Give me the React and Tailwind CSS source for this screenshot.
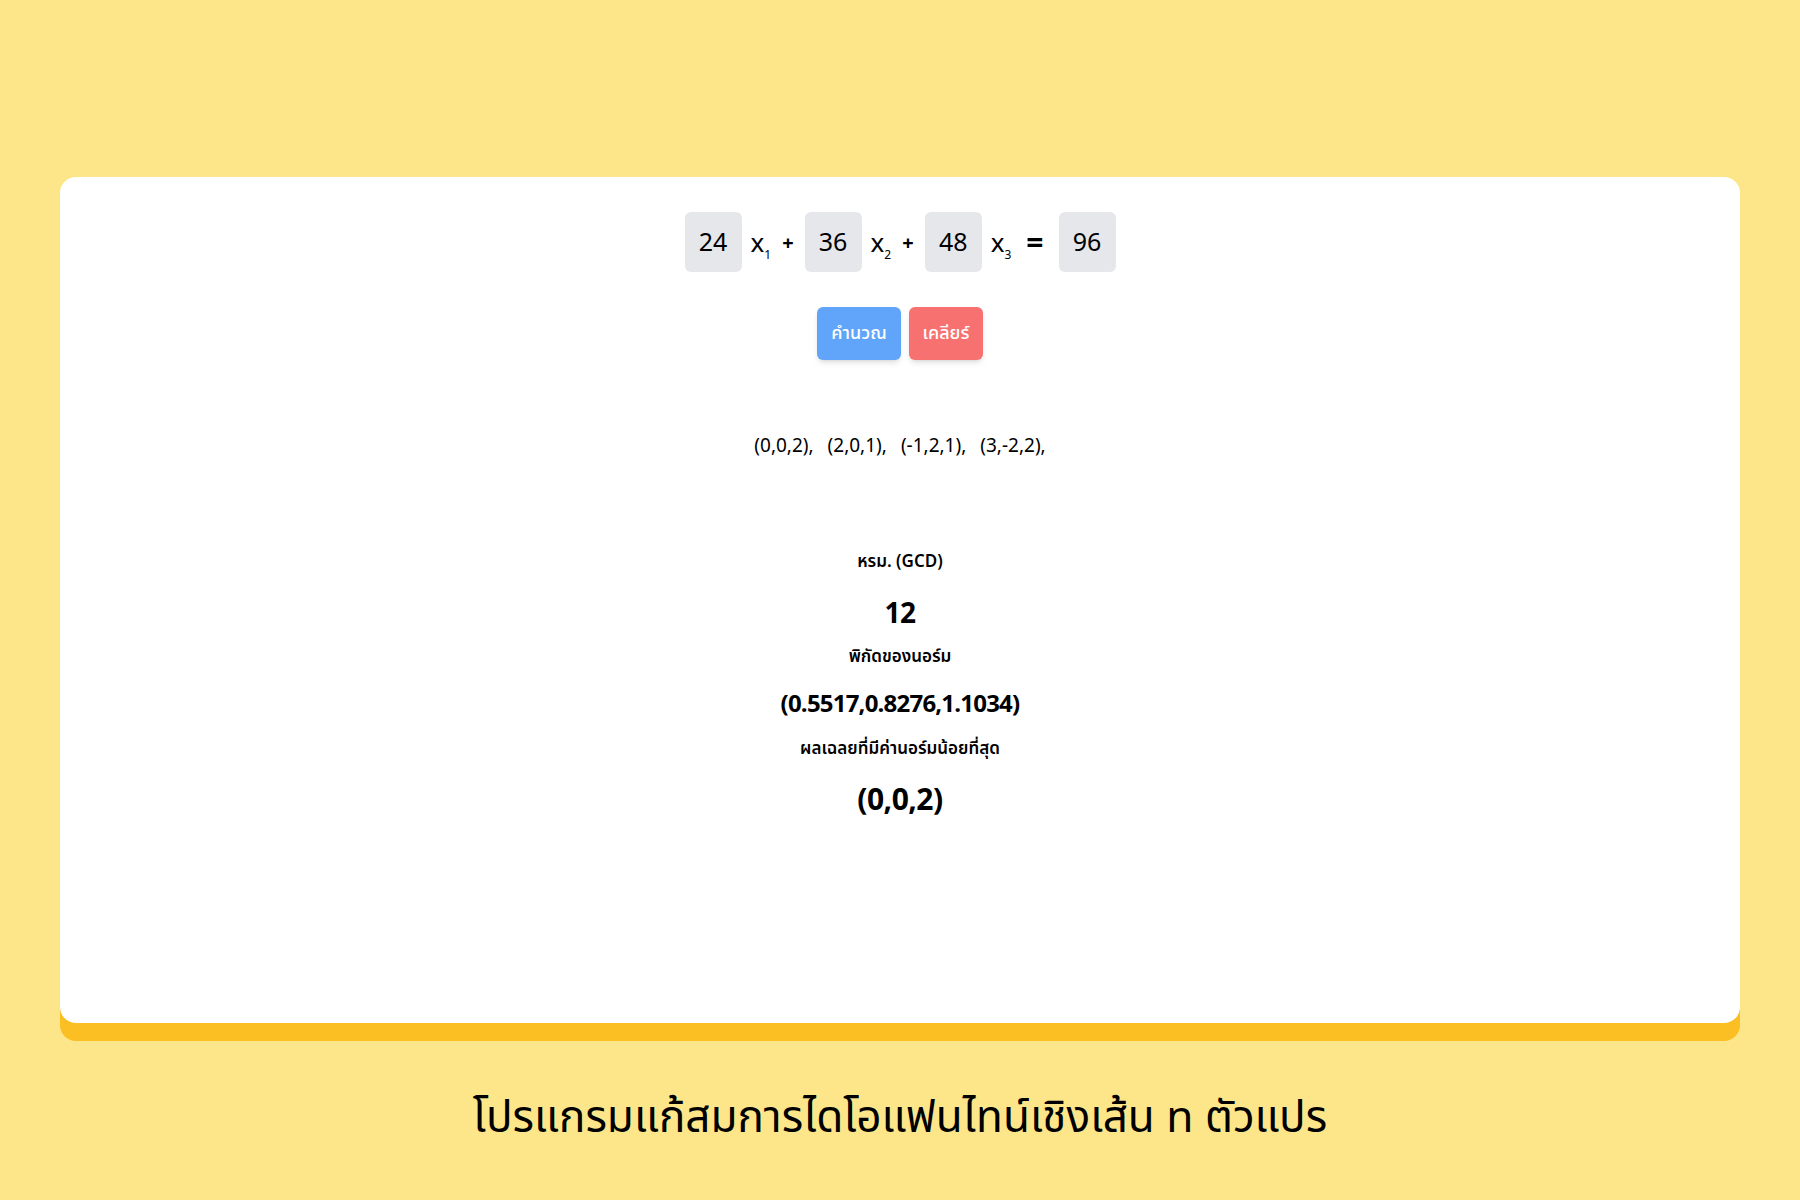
import React from "react";

const font = { fontFamily: '"Noto Sans Thai", "Noto Sans", "DejaVu Sans", sans-serif' };

function Box({ v }) {
  return (
    <div className="w-[57px] h-[60px] rounded-md bg-[#e5e7eb] flex items-center justify-center pt-[3px] text-[25px] text-black">
      {v}
    </div>
  );
}

function X({ n }) {
  return (
    <div className="flex items-end text-[26px] text-black leading-none pt-[4px]">
      <span>x</span>
      <span className="text-[12px] -mb-[4px]">{n}</span>
    </div>
  );
}

export default function App() {
  return (
    <div className="min-h-[1200px] w-full bg-[#fde68a] flex flex-col items-center pt-[177px]" style={font}>
      <div className="w-[1680px] h-[846px] bg-white rounded-2xl shadow-[0_18px_0_#fbbf24] flex flex-col items-center">
        <div className="mt-[35px] flex items-center gap-[9px]">
          <Box v="24" />
          <X n="1" />
          <span className="text-[20px] font-bold px-[2px] pt-[3px]">+</span>
          <Box v="36" />
          <X n="2" />
          <span className="text-[20px] font-bold px-[2px] pt-[3px]">+</span>
          <Box v="48" />
          <X n="3" />
          <span className="text-[30px] font-bold px-[6px] leading-none pt-[3px]">=</span>
          <Box v="96" />
        </div>
        <div className="mt-[35px] flex gap-[8px]">
          <button className="w-[84px] h-[53px] rounded-md bg-[#60a5fa] text-white text-[18px] font-medium shadow-md">คำนวณ</button>
          <button className="w-[74px] h-[53px] rounded-md bg-[#f87171] text-white text-[18px] font-medium shadow-md">เคลียร์</button>
        </div>
        <div className="mt-[73px] flex gap-[14px] text-[19px] text-black">
          <span>(0,0,2),</span>
          <span>(2,0,1),</span>
          <span>(-1,2,1),</span>
          <span>(3,-2,2),</span>
        </div>
        <div className="mt-[88px] flex flex-col items-center text-black">
          <div className="text-[17px] font-semibold">หรม. (GCD)</div>
          <div className="mt-[26px] text-[28px] font-bold leading-none tracking-[-0.5px]">12</div>
          <div className="mt-[16px] text-[17px] font-semibold">พิกัดของนอร์ม</div>
          <div className="mt-[22px] text-[24px] font-bold leading-none tracking-[-0.8px]">(0.5517,0.8276,1.1034)</div>
          <div className="mt-[20px] text-[17px] font-semibold">ผลเฉลยที่มีค่านอร์มน้อยที่สุด</div>
          <div className="mt-[24px] text-[30px] font-bold leading-none tracking-[-0.5px]">(0,0,2)</div>
        </div>
      </div>
      <div className="mt-[63px] text-[44px] text-black">โปรแกรมแก้สมการไดโอแฟนไทน์เชิงเส้น n ตัวแปร</div>
    </div>
  );
}
